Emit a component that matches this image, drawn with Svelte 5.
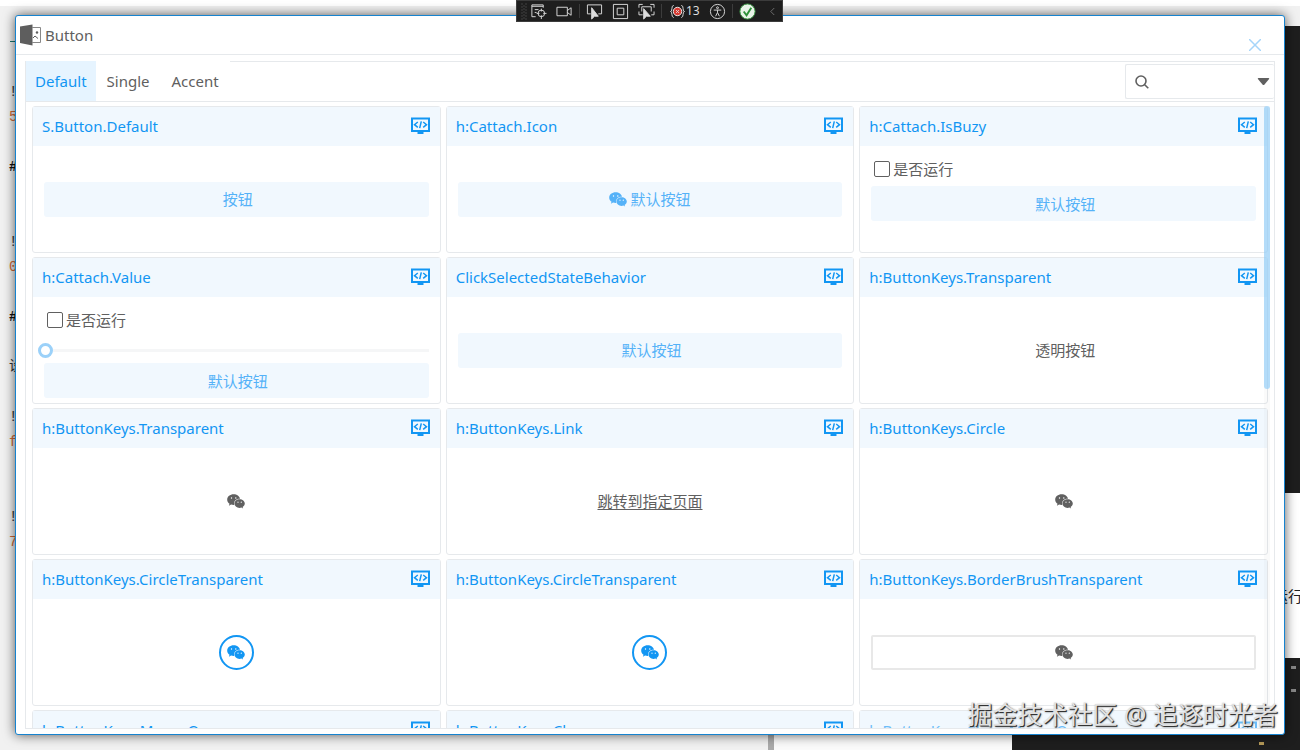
<script lang="ts">
	type Tone = 'soft' | 'plain' | 'link' | 'circle' | 'bordered';
	type Card = {
		title: string;
		tone: Tone;
		label?: string;
		icon?: boolean;
		check?: boolean;
		slider?: boolean;
		faded?: boolean;
	};

	const tabs = ['Default', 'Single', 'Accent'];

	const cards: Card[] = [
		{ title: 'S.Button.Default', tone: 'soft', label: '按钮' },
		{ title: 'h:Cattach.Icon', tone: 'soft', label: '默认按钮', icon: true },
		{ title: 'h:Cattach.IsBuzy', tone: 'soft', label: '默认按钮', check: true },
		{ title: 'h:Cattach.Value', tone: 'soft', label: '默认按钮', check: true, slider: true },
		{ title: 'ClickSelectedStateBehavior', tone: 'soft', label: '默认按钮' },
		{ title: 'h:ButtonKeys.Transparent', tone: 'plain', label: '透明按钮' },
		{ title: 'h:ButtonKeys.Transparent', tone: 'plain', icon: true },
		{ title: 'h:ButtonKeys.Link', tone: 'link', label: '跳转到指定页面' },
		{ title: 'h:ButtonKeys.Circle', tone: 'plain', icon: true },
		{ title: 'h:ButtonKeys.CircleTransparent', tone: 'circle', icon: true },
		{ title: 'h:ButtonKeys.CircleTransparent', tone: 'circle', icon: true },
		{ title: 'h:ButtonKeys.BorderBrushTransparent', tone: 'bordered', icon: true },
		{ title: 'h:ButtonKeys.MouseOver', tone: 'plain', icon: true },
		{ title: 'h:ButtonKeys.Close', tone: 'plain', icon: true },
		{ title: 'h:ButtonKeys.Close.MouseOver', tone: 'plain', icon: true, faded: true }
	];

	// Bits of the editor that peek out on the left of the window
	const editorText = [
		{ text: '!', top: 82, kind: 'dark' },
		{ text: '5', top: 107, kind: 'number' },
		{ text: '#', top: 157, kind: 'bold' },
		{ text: '!', top: 232, kind: 'dark' },
		{ text: '0', top: 257, kind: 'number' },
		{ text: '#', top: 307, kind: 'bold' },
		{ text: '设', top: 356, kind: 'dark' },
		{ text: '!', top: 407, kind: 'dark' },
		{ text: 'f', top: 432, kind: 'number' },
		{ text: '!', top: 507, kind: 'dark' },
		{ text: '7', top: 532, kind: 'number' }
	];

	let activeTab = $state('Default');
	let query = $state('');
</script>

{#snippet chat()}
	<svg class="chat" viewBox="0 0 18 15" aria-hidden="true">
		<path
			fill="currentColor"
			d="M6.7 0.3C3 .3.2 2.700.2 5.700c0 1.700.9 3.100 2.300 4.100L1.900 11.700l2.200-1.100c.8.2 1.600.4 2.600.4h.5A4.600 4.600 0 0 1 7 9.600C7 6.900 9.500 4.800 12.600 4.800h.4C12.500 2.200 9.900.3 6.700.3z"
		/>
		<path
			fill="currentColor"
			d="M12.600 5.300c-2.900 0-5.200 2-5.200 4.300s2.300 4.300 5.200 4.300c.6 0 1.200-.1 1.800-.3l1.700.9-.5-1.500c1.300-.8 2.200-2 2.200-3.400 0-2.300-2.300-4.300-5.200-4.300z"
		/>
		<g fill="#fff">
			<circle cx="4.500" cy="4" r=".7" />
			<circle cx="8.800" cy="4" r=".7" />
			<circle cx="11" cy="8.200" r=".6" />
			<circle cx="14.300" cy="8.200" r=".6" />
		</g>
	</svg>
{/snippet}

<div class="desktop">
	<div class="pane strip"></div>
	<div class="pane dark-upper"></div>
	<div class="pane white-side"></div>
	<div class="pane white-bottom"></div>
	<div class="pane dark-lower">
		<i></i><i></i><i></i>
	</div>
	<div class="rule"></div>
	{#each editorText as line}
		<span class="editor {line.kind}" style="top: {line.top}px">{line.text}</span>
	{/each}
	<span class="editor-side">运行</span>

	<main class="window">
		<header class="titlebar">
			<svg class="app-icon" viewBox="0 0 22 22" aria-hidden="true">
				<path d="M0 2.500 12.500.500v21L0 19z" fill="#5e5e5e" />
				<path d="M12 3.500h8.500v15H12" fill="none" stroke="#888" />
				<path d="M13 14l2-2 3 2.500" fill="none" stroke="#5e5e5e" />
				<circle cx="17" cy="8.500" r="1.200" fill="#5e5e5e" />
			</svg>
			<h1>Button</h1>
			<button class="close" aria-label="Close">
				<svg viewBox="0 0 12 12"><path d="M0 0l12 12M12 0 0 12" /></svg>
			</button>
		</header>

		<section class="panel">
			<div class="panel-head">
				<div class="tabs" role="tablist">
					{#each tabs as tab}
						<button
							class="tab"
							role="tab"
							class:active={tab === activeTab}
							aria-selected={tab === activeTab}
							onclick={() => (activeTab = tab)}>{tab}</button
						>
					{/each}
				</div>
				<div class="search">
					<svg viewBox="0 0 14 14" aria-hidden="true">
						<circle cx="6" cy="6" r="5" />
						<path d="M9.700 9.700l3.600 3.600" />
					</svg>
					<input type="text" aria-label="Search" bind:value={query} />
					<button aria-label="Show options">
						<svg class="caret" viewBox="0 0 12 7"><path d="M1 0h10q1 0 .6 1L7 6.500q-1 1-2 0L.4 1Q0 0 1 0z" /></svg>
					</button>
				</div>
			</div>

			<div class="scroller">
				<div class="grid">
					{#each cards as card, i}
						<article class="card" class:faded={card.faded}>
							<header>
								<h2>{card.title}</h2>
								<button class="code" aria-label="View code">
									<svg viewBox="0 0 19 17">
										<path d="M1 1h17v12.500H1z" fill="none" stroke-width="2" />
										<path d="M6.800 4.500 3.500 7.200l3.300 2.700M12.200 4.500l3.300 2.700-3.300 2.700M10.300 3.800 8.700 10.700" fill="none" stroke-width="1.500" />
										<path d="M6.500 15.500h6" stroke-width="2" />
									</svg>
								</button>
							</header>
							<div class="body" class:stacked={card.check}>
								{#if card.check}
									<label class="check" for="run-{i}">
										<input id="run-{i}" type="checkbox" />是否运行
									</label>
								{/if}
								{#if card.slider}
									<input class="slider" type="range" min="0" max="100" value="0" aria-label="Value" />
								{/if}
								{#if card.tone === 'link'}
									<a href="#page">{card.label}</a>
								{:else}
									<button class="demo {card.tone}" aria-label={card.label ?? card.title}>
										{#if card.icon}{@render chat()}{/if}
										{#if card.label}<span>{card.label}</span>{/if}
									</button>
								{/if}
							</div>
						</article>
					{/each}
				</div>
			</div>
			<div class="track"><div class="thumb"></div></div>
		</section>
	</main>

	<div class="debugbar">
		<svg class="grip" viewBox="0 0 6 16">
			<path d="M1 0v16M5 0v16M3 2v14" stroke="#666" stroke-dasharray="1 2" />
		</svg>
		<svg viewBox="0 0 18 18" width="17">
			<path d="M6 14.500H2V2h12v3M2 3.500h12M5 7h4M5 10h2" />
			<circle cx="12" cy="11" r="3.500" />
			<path d="M12 6v3M12 13v4M7 11h3M14 11h3.500" />
		</svg>
		<svg viewBox="0 0 18 18" width="17"><path d="M1 4.500h11v9H1zM12 8l4-3v8l-4-3" /></svg>
		<hr />
		<svg viewBox="0 0 18 18" width="17">
			<path d="M5 11.500H1.500V2h15v9.500H13" />
			<path d="M6 5v12l3-3h4z" fill="#ddd" />
		</svg>
		<svg viewBox="0 0 18 18" width="17"><path d="M1.500 1.500h15v15h-15zM5.500 5.500h7v7h-7z" /></svg>
		<svg viewBox="0 0 18 18" width="17">
			<path d="M1 5V1.500h4M13 1.500h4V5M1 9v3.500h4M17 9v3.500h-3M4 9V4h10v5" />
			<path d="M6 6v11l3-3h4z" fill="#ddd" />
		</svg>
		<hr />
		<span class="count">
			<svg viewBox="0 0 16 16" width="15">
				<path d="M4 1.500Q2 1.500 2 5t-1.500 3Q2 8 2 11t2 3.500M12 1.500q2 0 2 3.500t1.500 3Q14 8 14 11t-2 3.500" />
				<circle cx="8" cy="8" r="4.500" fill="#d83b32" stroke="#eee" />
				<path d="M6.500 6.500l3 3M9.500 6.500l-3 3" />
			</svg>13
		</span>
		<svg viewBox="0 0 18 18" width="17">
			<circle cx="9" cy="9" r="7.500" />
			<circle cx="9" cy="5" r="1" />
			<path d="M5 7.500h8M9 7.500V10M9 10l-2 4M9 10l2 4" />
		</svg>
		<hr />
		<svg viewBox="0 0 18 18" width="17">
			<circle cx="9" cy="9" r="8" fill="#e8f3e8" stroke="#3c9b45" />
			<path d="M5 9l3 4 5-8" stroke="#2d9138" stroke-width="2" />
		</svg>
		<svg class="dim" viewBox="0 0 8 16" width="7"><path d="M6 4 2 8l4 4" /></svg>
	</div>

	<div class="watermark">掘金技术社区 @ 追逐时光者</div>
</div>

<style>
	:global(body) {
		margin: 0;
	}

	.desktop {
		--blue: #1296f3;
		--line: #e6e9ec;
		position: relative;
		display: flex;
		box-sizing: border-box;
		height: 100vh;
		padding: 15px;
		overflow: hidden;
		background: #f1f1f1;
		color: #606060;
		font: 15px/20px 'Noto Sans', 'Noto Sans CJK SC', sans-serif;
	}

	button,
	input {
		margin: 0;
		padding: 0;
		border: 0;
		background: none;
		color: inherit;
		font: inherit;
	}

	h1,
	h2 {
		margin: 0;
		font-size: 15px;
		font-weight: 400;
	}

	/* ─── Behind the window ─── */
	.pane {
		position: absolute;
		right: 0;
	}

	.strip {
		top: 0;
		left: 0;
		height: 6px;
		background: #fff;
	}

	.dark-upper {
		top: 26px;
		width: 40px;
		height: 467px;
		background: #1e1e1e;
	}

	.white-side {
		top: 493px;
		width: 40px;
		height: 165px;
		background: #fff;
	}

	.white-bottom {
		right: 288px;
		bottom: 0;
		width: 238px;
		height: 40px;
		border-left: 6px solid #aaa;
		background: #fafafa;
	}

	.dark-lower {
		bottom: 0;
		width: 288px;
		height: 92px;
		background: #1e1e1e;
	}

	.dark-lower i {
		position: absolute;
		right: 4px;
		width: 5px;
		height: 3px;
		background: #888;
	}

	.dark-lower i:nth-child(1) {
		top: 8px;
	}

	.dark-lower i:nth-child(2) {
		top: 31px;
	}

	.dark-lower i:nth-child(3) {
		top: 84px;
		right: 36px;
		background: #b59a58;
	}

	.rule {
		position: absolute;
		top: 41px;
		left: 10px;
		width: 8px;
		height: 1px;
		background: #197870;
	}

	.editor {
		position: absolute;
		left: 9px;
		color: #333;
		font: 14px/20px 'Liberation Mono', 'Noto Sans CJK SC', monospace;
	}

	.editor.number {
		color: #cf6a38;
	}

	.editor.bold {
		color: #111;
		font-weight: 700;
	}

	.editor-side {
		position: absolute;
		top: 586px;
		right: -3px;
		color: #222;
	}

	/* ─── Window ─── */
	.window {
		position: relative;
		display: flex;
		flex: 1;
		flex-direction: column;
		min-width: 0;
		border: 1px solid #1683cf;
		border-radius: 3px;
		background: #fff;
		box-shadow: 0 0 12px rgba(0, 0, 0, 0.65);
	}

	.titlebar {
		display: flex;
		align-items: center;
		gap: 3px;
		height: 38px;
		padding: 0 22px 0 4px;
		border-bottom: 1px solid var(--line);
	}

	.app-icon {
		width: 22px;
		height: 22px;
	}

	.close {
		align-self: flex-end;
		width: 14px;
		height: 18px;
		margin-left: auto;
	}

	.close svg {
		display: block;
		width: 12px;
		height: 12px;
		margin: auto;
		stroke: #a5d5fa;
		stroke-width: 1.5;
	}

	.panel {
		position: relative;
		display: flex;
		flex: 1;
		flex-direction: column;
		min-height: 0;
		margin: 6px 9px 5px;
		border: 1px solid var(--line);
	}

	.panel-head {
		display: flex;
		align-items: center;
		justify-content: space-between;
		height: 39px;
		border-bottom: 1px solid var(--line);
	}

	.tabs {
		display: flex;
		margin-top: -1px;
		background: #fff;
	}

	.tab {
		height: 40px;
		padding: 0 11px;
	}

	.tab.active {
		padding: 0 9px;
		background: #e6f4ff;
		color: var(--blue);
	}

	.search {
		display: flex;
		align-items: center;
		box-sizing: border-box;
		width: 149px;
		height: 35px;
		padding: 0 4px 0 9px;
		border: 1px solid var(--line);
		border-right: 0;
		border-radius: 2px;
	}

	.search svg {
		flex-shrink: 0;
		width: 14px;
		height: 14px;
		fill: none;
		stroke: #606060;
		stroke-width: 1.6;
	}

	.search input {
		flex: 1;
		min-width: 0;
		padding: 0 6px;
		outline: none;
	}

	.search button {
		display: flex;
	}

	.search .caret {
		width: 13px;
		height: 7px;
		fill: #606060;
		stroke: none;
	}

	.scroller {
		flex: 1;
		min-height: 0;
		margin: 4px 6px 0;
		overflow-y: auto;
		scrollbar-width: none;
	}

	.grid {
		display: grid;
		grid-template-columns: repeat(3, 1fr);
		gap: 4px 5px;
	}

	.track {
		position: absolute;
		top: 44px;
		right: 4px;
		bottom: 0;
		width: 6px;
		background: rgba(0, 0, 0, 0.02);
	}

	.thumb {
		height: 283px;
		border-radius: 3px;
		background: rgba(150, 206, 248, 0.7);
	}

	/* ─── Cards ─── */
	.card {
		display: flex;
		flex-direction: column;
		box-sizing: border-box;
		min-width: 0;
		height: 147px;
		border: 1px solid var(--line);
		border-radius: 3px;
	}

	.card header {
		display: flex;
		align-items: flex-start;
		justify-content: space-between;
		box-sizing: border-box;
		height: 39px;
		padding: 9px 10px 0 9px;
		background: #f1f8fe;
		color: var(--blue);
	}

	.faded header {
		color: #6cbdf8;
	}

	.code svg {
		display: block;
		width: 19px;
		height: 20px;
		stroke: currentColor;
	}

	.body {
		display: flex;
		flex: 1;
		flex-direction: column;
		align-items: center;
		justify-content: center;
		padding: 0 11px;
	}

	.body.stacked {
		justify-content: flex-start;
		padding-top: 10px;
	}

	.check {
		display: flex;
		align-items: center;
		align-self: flex-start;
		gap: 3px;
		height: 25px;
		margin: 0 0 5px 3px;
	}

	.check input {
		box-sizing: border-box;
		width: 16px;
		height: 16px;
		border: 1px solid #606060;
		border-radius: 2px;
		background: #fff;
		appearance: none;
	}

	.check input:checked {
		background: var(--blue);
	}

	.slider {
		align-self: stretch;
		height: 26px;
		margin-left: -6px;
		appearance: none;
	}

	.slider::-webkit-slider-runnable-track {
		height: 3px;
		background: linear-gradient(to right, transparent 15px, #f5f6f7 15px);
	}

	.slider::-webkit-slider-thumb {
		box-sizing: border-box;
		width: 15px;
		height: 15px;
		margin-top: -6px;
		border: 3px solid #9bd1f9;
		border-radius: 50%;
		background: #fff;
		appearance: none;
	}

	.demo {
		display: flex;
		align-items: center;
		justify-content: center;
		box-sizing: border-box;
		height: 35px;
	}

	.demo span {
		padding-left: 3px;
	}

	.demo.soft {
		width: 100%;
		border-radius: 3px;
		background: #f1f8fe;
		color: #55b2f8;
	}

	.demo.circle {
		width: 35px;
		border: 2px solid var(--blue);
		border-radius: 50%;
		color: var(--blue);
	}

	.demo.bordered {
		width: 100%;
		border: 2px solid #e8e8e8;
		border-radius: 2px;
	}

	.chat {
		flex-shrink: 0;
		width: 18px;
		height: 15px;
	}

	.body a {
		color: inherit;
		text-underline-offset: 2px;
	}

	/* ─── Debug toolbar ─── */
	.debugbar {
		position: absolute;
		top: 0;
		left: 50%;
		display: flex;
		align-items: center;
		gap: 9px;
		box-sizing: border-box;
		width: 267px;
		height: 22px;
		margin-left: -134px;
		padding: 0 6px 0 4px;
		border: 1px solid #3c3c3c;
		background: #1e1e1e;
		color: #ddd;
		font-size: 12px;
	}

	.debugbar svg {
		flex-shrink: 0;
		height: 17px;
		fill: none;
		stroke: #ddd;
	}

	.debugbar .grip {
		width: 6px;
		margin-right: -6px;
	}

	.debugbar .dim {
		margin-left: auto;
		stroke: #777;
	}

	.debugbar hr {
		flex-shrink: 0;
		width: 1px;
		height: 14px;
		margin: 0 -3px;
		border: 0;
		background: #3c3c3c;
	}

	.count {
		display: flex;
		align-items: center;
		gap: 1px;
		padding-left: 2px;
	}

	.watermark {
		position: absolute;
		right: 22px;
		bottom: 21px;
		color: #e2e2e2;
		font-size: 25px;
		line-height: 30px;
		text-shadow:
			1px 1px 0 #333,
			1px 1px 2px #555;
		white-space: nowrap;
	}
</style>
